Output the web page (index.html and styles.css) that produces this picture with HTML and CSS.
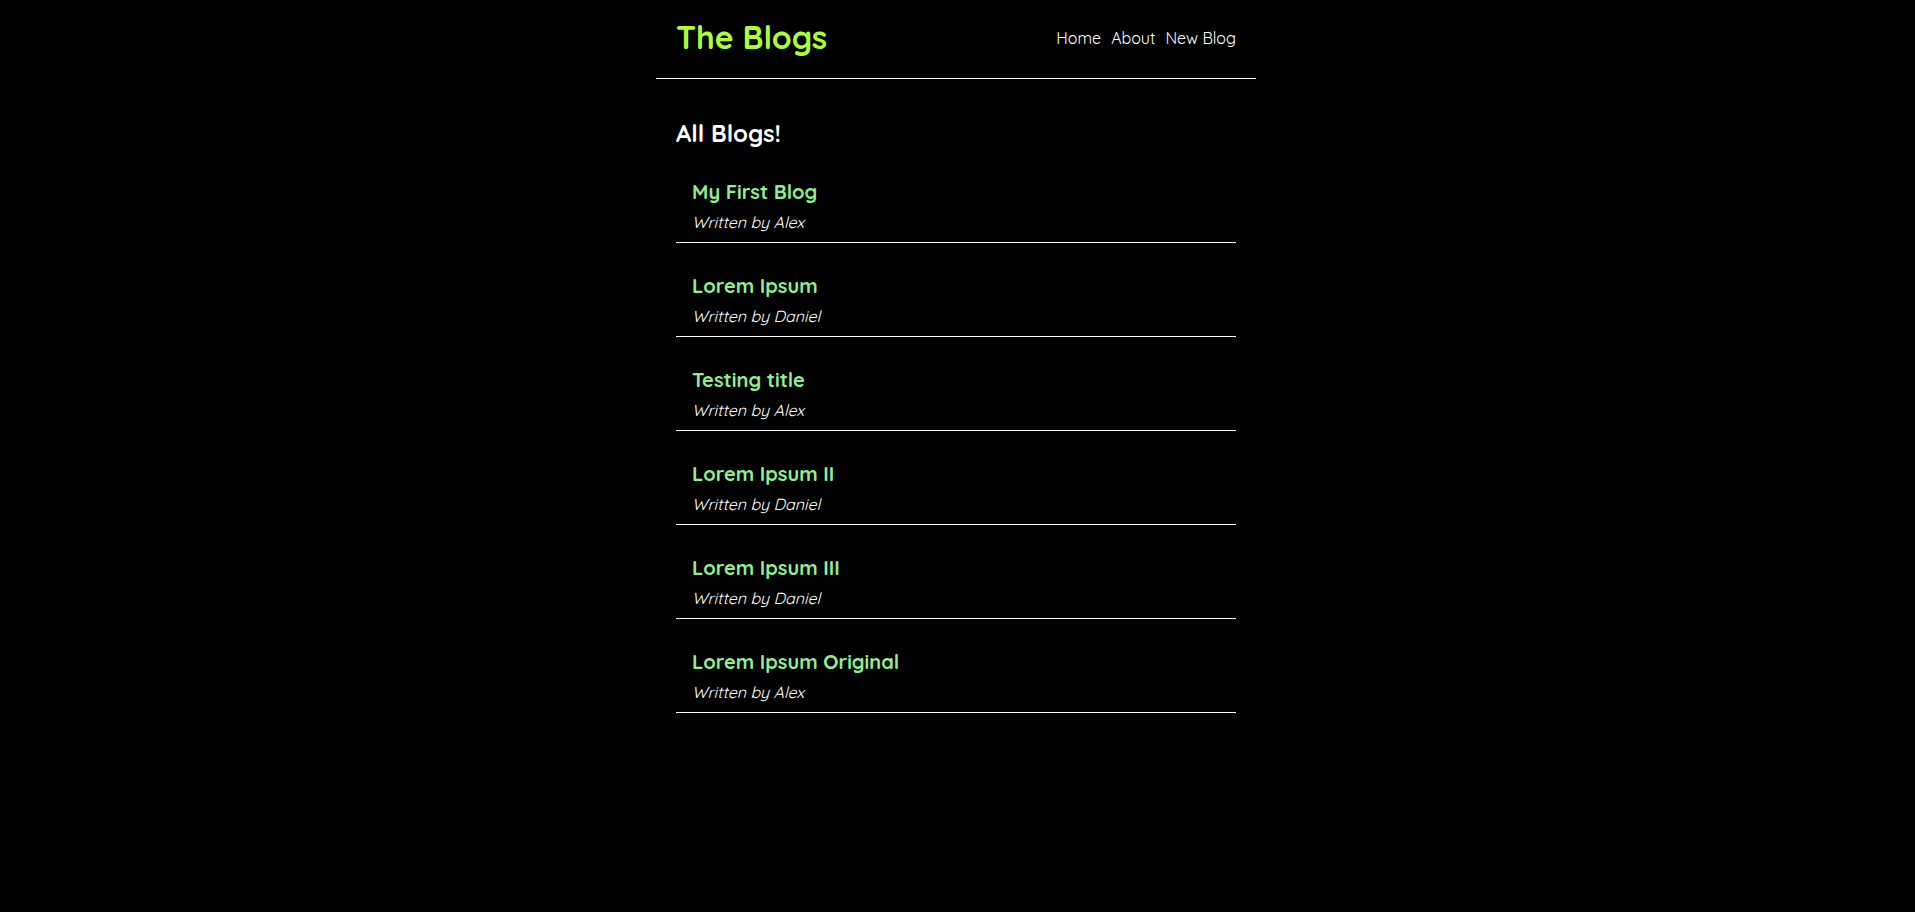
FILE: index.html
```html
<!DOCTYPE html>
<html lang="en">
<head>
<meta charset="utf-8">
<title>The Blogs</title>
<link rel="stylesheet" href="styles.css">
</head>
<body>
<div class="app">
  <nav class="navbar">
    <h1 class="brand">The Blogs</h1>
    <div class="links">
      <a class="link" href="#">Home</a>
      <a class="link" href="#">About</a>
      <a class="link" href="#">New Blog</a>
    </div>
  </nav>
  <main class="content">
    <h2 class="page-title">All Blogs!</h2>
    <div class="blog-list">
      <div class="blog-preview">
        <h2 class="blog-title">My First Blog</h2>
        <p class="blog-author">Written by Alex</p>
      </div>
      <div class="blog-preview">
        <h2 class="blog-title">Lorem Ipsum</h2>
        <p class="blog-author">Written by Daniel</p>
      </div>
      <div class="blog-preview">
        <h2 class="blog-title">Testing title</h2>
        <p class="blog-author">Written by Alex</p>
      </div>
      <div class="blog-preview">
        <h2 class="blog-title">Lorem Ipsum II</h2>
        <p class="blog-author">Written by Daniel</p>
      </div>
      <div class="blog-preview">
        <h2 class="blog-title">Lorem Ipsum III</h2>
        <p class="blog-author">Written by Daniel</p>
      </div>
      <div class="blog-preview">
        <h2 class="blog-title">Lorem Ipsum Original</h2>
        <p class="blog-author">Written by Alex</p>
      </div>
    </div>
  </main>
</div>
</body>
</html>
```

FILE: styles.css
```css
* {
  margin: 0;
  box-sizing: border-box;
}

html, body {
  background: #000;
}

body {
  margin: 0;
  padding-right: 3px;
  min-height: 912px;
  font-family: "Quicksand", "Lato", "Roboto", sans-serif;
  color: #fff;
}

.navbar {
  width: 600px;
  margin: 0 auto;
  padding: 17px 20px 21px;
  display: flex;
  align-items: center;
  border-bottom: 1px solid #f2f2f2;
}

.brand {
  font-size: 32px;
  line-height: 40px;
  font-weight: 700;
  color: #adff2f;
}

.links {
  margin-left: auto;
  padding-top: 2px;
  display: flex;
  gap: 10px;
}

.link {
  font-size: 16px;
  line-height: 20px;
  color: #fff;
  text-decoration: none;
}

.content {
  width: 600px;
  margin: 0 auto;
  padding: 39px 20px 20px;
}

.page-title {
  font-size: 24px;
  line-height: 30px;
  font-weight: 700;
  color: #fff;
  margin-bottom: 21px;
}

.blog-list {
  display: flex;
  flex-direction: column;
  gap: 20px;
}

.blog-preview {
  padding: 10px 16px;
  border-bottom: 1px solid #fafafa;
}

.blog-title {
  font-size: 20px;
  line-height: 25px;
  font-weight: 700;
  color: #90ee90;
  margin-bottom: 8px;
}

.blog-author {
  font-size: 16px;
  line-height: 20px;
  font-style: italic;
  color: #fff;
}
```
